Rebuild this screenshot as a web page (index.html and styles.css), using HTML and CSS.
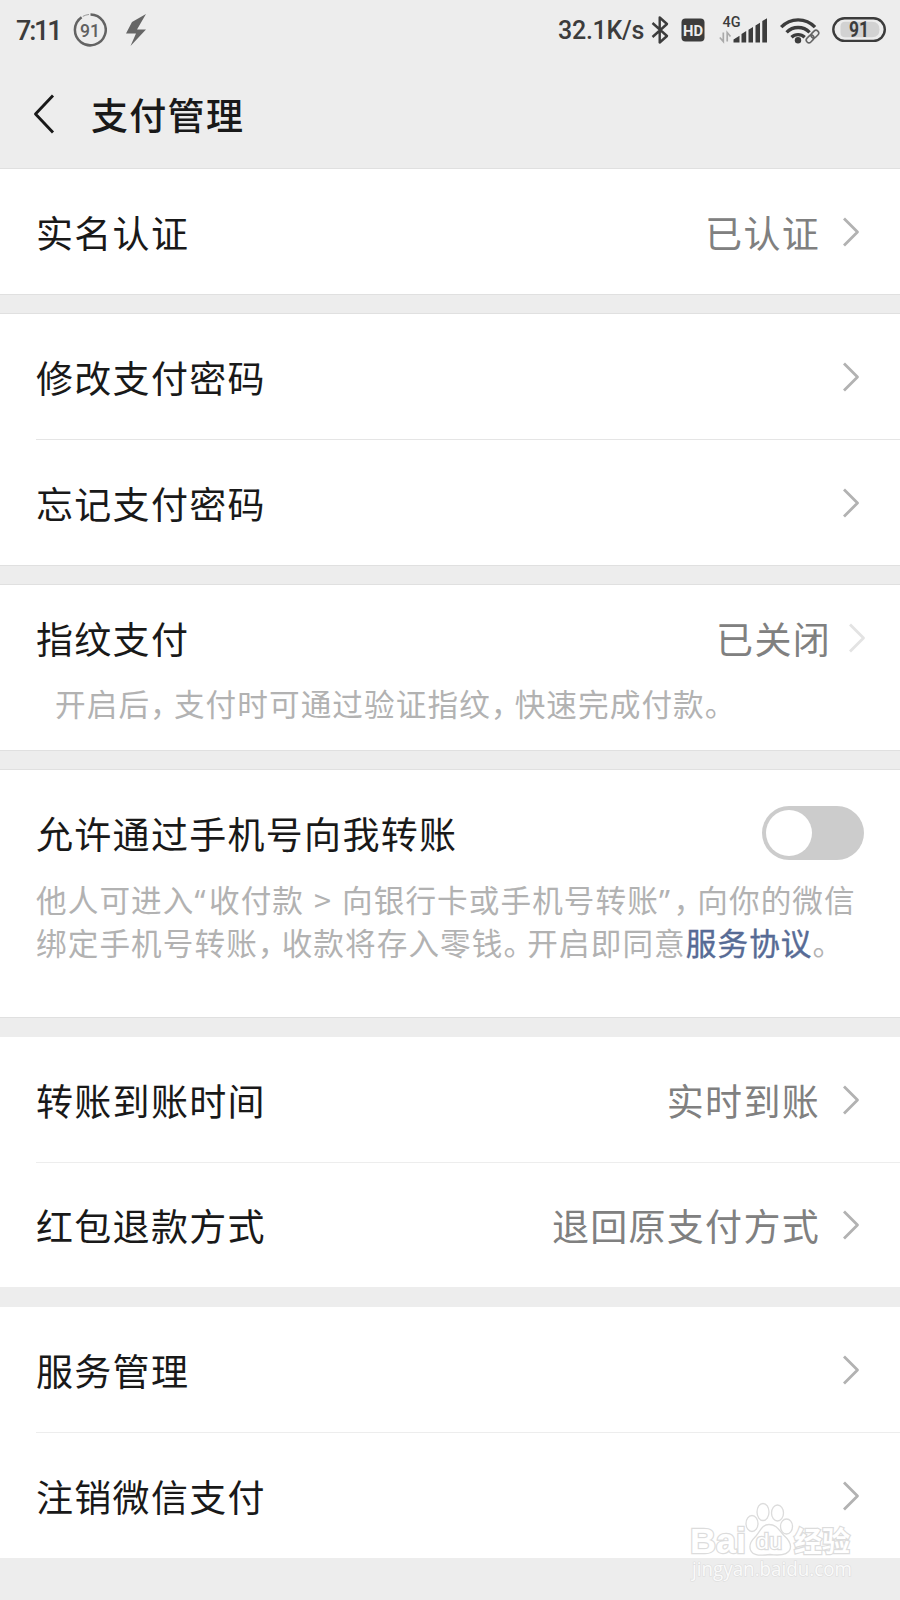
FILE: index.html
```html
<!DOCTYPE html>
<html lang="zh-CN">
<head>
    <meta charset="UTF-8">
    <meta name="viewport" content="width=device-width, initial-scale=1.0">
    <title>支付管理</title>
    <link rel="stylesheet" href="styles.css">
</head>
<body>
    <svg class="defs">
        <symbol id="arrow" viewBox="0 0 18 32">
            <path d="M2 2.5L15.5 16L2 29.5" fill="none" stroke="currentColor" stroke-width="2.8" stroke-linejoin="round"/>
        </symbol>
    </svg>

    <div class="status">
        <span class="time">7:11</span>
        <svg class="power" width="34" height="34" viewBox="0 0 34 34">
            <path d="M17.5 1.5A15.4 15.4 0 1 1 8.6 4.2" fill="none" stroke="#636363" stroke-width="2.5"/>
            <path d="M9.8 3.4A15.4 15.4 0 0 1 16 1.5" fill="none" stroke="#999" stroke-width="1"/>
            <text x="17" y="23.8" text-anchor="middle" font-size="19" font-weight="500" textLength="20" lengthAdjust="spacingAndGlyphs" fill="#606060">91</text>
        </svg>
        <svg class="bolt" width="22" height="34" viewBox="0 0 22 34">
            <path d="M21 1L7 9L1 20.5H11L5.5 33L21 16.5H12Z" fill="#666"/>
        </svg>
        <span class="speed">32.1K/s</span>
        <svg class="bluetooth" width="18" height="30" viewBox="0 0 18 30">
            <path d="M1.5 8L16 21L8.700 27.500V2.500L16 9L1.500 22" fill="none" stroke="#3c3c3c" stroke-width="2.4" stroke-linejoin="round"/>
        </svg>
        <svg class="hd" width="24" height="24" viewBox="0 0 24 24">
            <rect x=".5" y=".5" width="23" height="23" rx="4" fill="#3c3c3c"/>
            <text x="12" y="17.6" text-anchor="middle" font-size="15.5" font-weight="700" textLength="20" lengthAdjust="spacingAndGlyphs" fill="#ededed">HD</text>
        </svg>
        <svg class="signal" width="50" height="30" viewBox="0 0 50 30">
            <text x="3.500" y="12.200" font-size="14.500" font-weight="500" textLength="18" lengthAdjust="spacingAndGlyphs" fill="#3c3c3c">4G</text>
            <path d="M4.3 17.5V26.5L.8 22.5M8.2 26.5V17.5L11.5 21.5" fill="none" stroke="#aaa" stroke-width="1.7"/>
            <path d="M14.5 27.5V24.5L20.5 20.8V27.5ZM22.5 27.5V19L27.2 16V27.5ZM29.5 27.5V14.8L34 12V27.5ZM36.5 27.5V10.5L41 7.8V27.5ZM43.3 27.5V6L48 3.3V27.5Z" fill="#3c3c3c"/>
        </svg>
        <svg class="wifi" width="40" height="30" viewBox="0 0 40 30">
            <g fill="none" stroke="#3c3c3c" stroke-width="3.3">
                <path d="M1.2 12.2A23 23 0 0 1 35 12.2"/>
                <path d="M6.6 17.4A16 16 0 0 1 29.6 17.4"/>
                <path d="M11.5 22.2A9.5 9.5 0 0 1 24.7 22.2"/>
            </g>
            <circle cx="18" cy="25.3" r="3.2" fill="#3c3c3c"/>
            <path d="M28 27L38 17" stroke="#ededed" stroke-width="4"/>
            <g fill="none" stroke="#666" stroke-width="1.6" transform="rotate(-45 32.500 21.500)">
                <rect x="24.800" y="18.800" width="8.600" height="5.400" rx="2.700"/>
                <rect x="31.500" y="18.800" width="8.600" height="5.400" rx="2.700"/>
            </g>
        </svg>
        <svg class="battery" width="56" height="28" viewBox="0 0 56 28">
            <rect x="2.3" y="2.3" width="51.5" height="22.6" rx="11.3" fill="#ededed" stroke="#3c3c3c" stroke-width="2.4"/>
            <path d="M14 5.8H41Q48.5 5.8 48.5 13.5Q48.5 21.3 41 21.3H14Q9.500 21.300 9.500 16.500V10.500Q9.500 5.800 14 5.800Z" fill="#d2d2d2"/>
            <text x="28" y="21.300" text-anchor="middle" font-size="22" font-weight="700" textLength="20" lengthAdjust="spacingAndGlyphs" fill="#3c3c3c">91</text>
        </svg>
    </div>

    <div class="nav">
        <svg class="back" width="22" height="40" viewBox="0 0 22 40">
            <path d="M20 1.5L2.5 20L20 38.5" fill="none" stroke="#191919" stroke-width="2.9" stroke-linejoin="round"/>
        </svg>
        <h1>支付管理</h1>
    </div>

    <div class="group">
        <div class="row">
            <span class="label">实名认证</span>
            <span class="value">已认证</span>
            <svg class="arrow"><use href="#arrow"/></svg>
        </div>
    </div>

    <div class="group">
        <div class="row">
            <span class="label">修改支付密码</span>
            <svg class="arrow"><use href="#arrow"/></svg>
        </div>
        <div class="line"></div>
        <div class="row">
            <span class="label">忘记支付密码</span>
            <svg class="arrow"><use href="#arrow"/></svg>
        </div>
    </div>

    <div class="group finger">
        <div class="row">
            <span class="label">指纹支付</span>
            <span class="value">已关闭</span>
            <svg class="arrow"><use href="#arrow"/></svg>
        </div>
        <p class="desc">开启后<i>，</i>支付时可通过验证指纹<i>，</i>快速完成付款。</p>
    </div>

    <div class="group transfer">
        <div class="row">
            <span class="label">允许通过手机号向我转账</span>
            <span class="switch"></span>
        </div>
        <p class="desc">他人可进入<b>“</b>收付款 &gt; 向银行卡或手机号转账<b>”</b><i>，</i>向你的微信<br>绑定手机号转账<i>，</i>收款将存入零钱<i>。</i>开启即同意<a>服务协议</a>。</p>
    </div>

    <div class="group soft">
        <div class="row">
            <span class="label">转账到账时间</span>
            <span class="value">实时到账</span>
            <svg class="arrow"><use href="#arrow"/></svg>
        </div>
        <div class="line"></div>
        <div class="row refund">
            <span class="label">红包退款方式</span>
            <span class="value">退回原支付方式</span>
            <svg class="arrow"><use href="#arrow"/></svg>
        </div>
    </div>

    <div class="group soft last">
        <div class="row">
            <span class="label">服务管理</span>
            <svg class="arrow"><use href="#arrow"/></svg>
        </div>
        <div class="line"></div>
        <div class="row">
            <span class="label">注销微信支付</span>
            <svg class="arrow"><use href="#arrow"/></svg>
        </div>
    </div>

    <svg class="watermark" width="180" height="90" viewBox="0 0 180 90">
        <g fill="#fff" stroke="#dcdcdc" stroke-width="1.3">
            <text class="baidu" x="9" y="53" font-size="35" textLength="56" lengthAdjust="spacingAndGlyphs">Bai</text>
            <ellipse cx="71" cy="23.500" rx="6" ry="8"/>
            <ellipse cx="82" cy="12" rx="6" ry="8.500"/>
            <ellipse cx="96.500" cy="13" rx="6" ry="8"/>
            <ellipse cx="105.500" cy="26.500" rx="6" ry="7.500"/>
            <path d="M88 24.500C96 24.500 98.500 31 103 35.500C108 40 111 44 109 49.500C106.500 56 97 55.500 89 54.500C81 55.500 72 56.500 69.500 50C67.500 44 71 40 75 36C79 31.500 81 24.500 88 24.500Z"/>
            <text class="du" x="75" y="49" font-size="22" textLength="26" lengthAdjust="spacingAndGlyphs">du</text>
            <text class="jingyan" x="113" y="52" font-size="28" textLength="56">经验</text>
        </g>
        <text class="site" x="11" y="75.500" font-size="20" textLength="160" lengthAdjust="spacingAndGlyphs">jingyan.baidu.com</text>
    </svg>
</body>
</html>
```
FILE: styles.css
```css
*{
    box-sizing: border-box;
}
body{
    margin: 0;
    width: 900px;
    height: 1600px;
    position: relative;
    overflow: hidden;
    background-color: #ededed;
    color: #191919;
    font-family: "Noto Sans CJK SC", sans-serif;
}
.defs{
    display: none;
}
svg{
    flex: none;
    display: block;
}
.status{
    display: flex;
    align-items: center;
    height: 60px;
    padding: 0 13px 0 16px;
    color: #3c3c3c;
    font-family: Roboto, sans-serif;
    font-weight: 500;
}
.time{
    width: 57px;
    padding-top: 1px;
    font-size: 27px;
    letter-spacing: -2.2px;
}
.bolt{
    margin-left: 18px;
}
.speed{
    margin-left: auto;
    margin-right: 7px;
    padding-top: 1px;
    font-size: 25px;
    letter-spacing: -0.3px;
}
.hd{
    margin-left: 12px;
}
.signal{
    margin-left: 14px;
}
.wifi{
    margin-left: 11px;
}
.battery{
    margin-left: 11px;
}
.nav{
    display: flex;
    align-items: center;
    height: 109px;
    padding-left: 33px;
    border-bottom: 1px solid #e0e0e0;
}
h1{
    margin: 0 0 0 36px;
    font-size: 37px;
    font-weight: 500;
    letter-spacing: 1.3px;
}
.group{
    margin-bottom: 18px;
    border-bottom: 1px solid #e0e0e0;
    border-top: 1px solid #e0e0e0;
    background-color: #fff;
}
.nav + .group{
    border-top: none;
}
.row{
    display: flex;
    align-items: center;
    height: 125px;
    padding: 0 40px 0 36px;
}
.label, .value{
    font-size: 37px;
    line-height: 54px;
    letter-spacing: 1.3px;
}
.label{
    flex: 1;
}
.value{
    color: #808080;
}
.arrow{
    width: 18px;
    height: 32px;
    margin-left: 22px;
    color: #b2b2b2;
}
.line{
    height: 1px;
    margin-left: 36px;
    background-color: #e5e5e5;
}
.desc{
    margin: 0;
    color: #b2b2b2;
    font-size: 30.6px;
    line-height: 42.6px;
    letter-spacing: 1.1px;
    word-spacing: 2px;
    white-space: nowrap;
}
/* narrow punctuation */
.desc i{
    font-style: normal;
    letter-spacing: -6.8px;
}
.desc b{
    font-family: "Noto Sans", sans-serif;
    font-weight: 400;
    line-height: 1;
    letter-spacing: 3.5px;
}
.desc a{
    color: #576b95;
    -webkit-text-stroke: 0.4px #576b95;
}
.finger{
    height: 167px;
    padding-top: 26px;
}
.finger .row{
    height: 54px;
    padding-right: 34px;
}
.finger .arrow{
    margin-left: 17px;
    color: #e3e3e3;
}
.finger .desc{
    padding: 17px 0 0 55px;
}
.transfer{
    height: 249px;
    padding-top: 35px;
}
.transfer .row{
    height: 56px;
    padding-right: 36px;
}
.transfer .desc{
    padding: 17px 0 0 36px;
}
.switch{
    width: 102px;
    height: 54px;
    padding: 4px;
    border-radius: 27px;
    background-color: #ccc;
}
.switch::before{
    content: "";
    display: block;
    width: 46px;
    height: 46px;
    border-radius: 50%;
    background-color: #fff;
}
.soft{
    border-color: #ededed;
}
.soft .line{
    background-color: #ededed;
}
.refund{
    height: 124px;
}
.last{
    margin-bottom: 0;
}
.watermark{
    position: absolute;
    left: 681px;
    top: 1500px;
}
.status text{
    font-family: Roboto, sans-serif;
}
.baidu, .du{
    font-family: "Liberation Sans", sans-serif;
    font-weight: 700;
    paint-order: stroke;
    stroke-width: 2.4px;
}
.du{
    font-weight: 400;
}
.jingyan{
    font-family: "Noto Sans CJK SC", sans-serif;
    font-weight: 700;
    paint-order: stroke;
    stroke-width: 2.4px;
}
.site{
    font-family: "Open Sans", sans-serif;
    fill: #fafafa;
    stroke: #dcdcdc;
    stroke-width: 1.2px;
    paint-order: stroke;
}
```
